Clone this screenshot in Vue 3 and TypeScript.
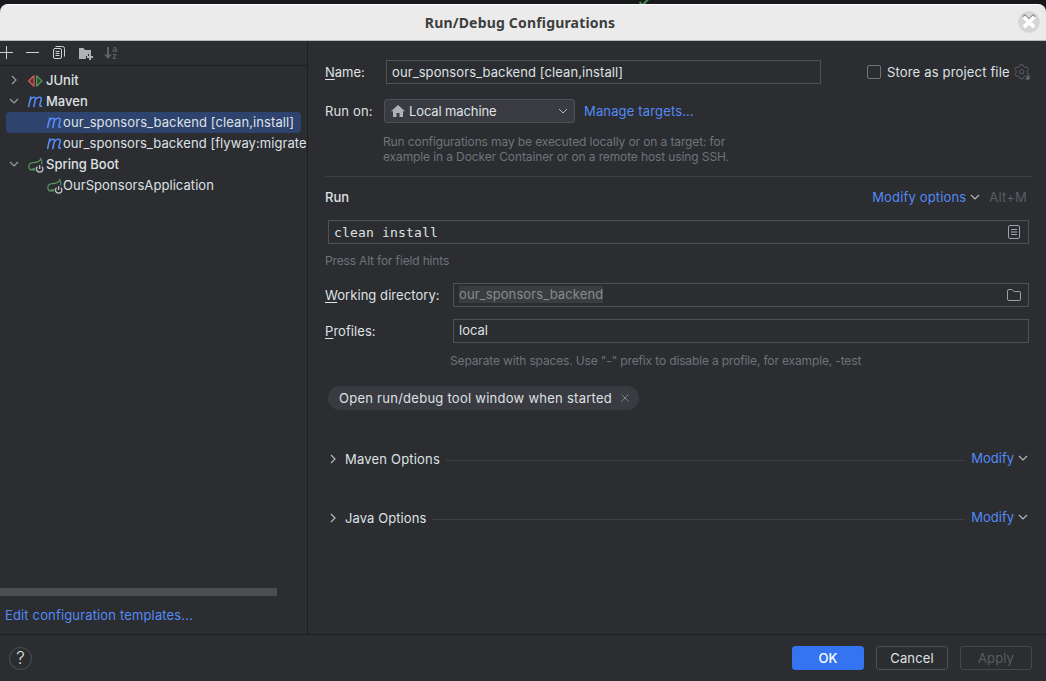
<script setup lang="ts">
import { ref } from 'vue'

type IconKind = 'junit' | 'maven' | 'spring'
interface TreeRow {
  label: string
  icon: IconKind
  cls: string
  group?: boolean
  open?: boolean
  selected?: boolean
}

const rows: TreeRow[] = [
  { label: 'JUnit', icon: 'junit', cls: 't-junit', group: true, open: false },
  { label: 'Maven', icon: 'maven', cls: 't-maven', group: true, open: true },
  { label: 'our_sponsors_backend [clean,install]', icon: 'maven', cls: 't-clean', selected: true },
  { label: 'our_sponsors_backend [flyway:migrate', icon: 'maven', cls: 't-flyway' },
  { label: 'Spring Boot', icon: 'spring', cls: 't-spring', group: true, open: true },
  { label: 'OurSponsorsApplication', icon: 'spring', cls: 't-app' },
]

const name = ref('our_sponsors_backend [clean,install]')
const command = ref('clean install')
const profiles = ref('local')
const sections = ['Maven Options', 'Java Options']
</script>

<template>
  <div class="screen">
    <div class="backdrop">
      <svg class="tick" width="14" height="4" viewBox="0 0 14 4"><path d="M1.500 2l2 2M4.500 5l6-6" stroke="#3f8f4b" stroke-width="2" fill="none" /></svg>
    </div>
    <header class="titlebar">
      <span class="title">Run/Debug Configurations</span>
      <svg class="close" width="22" height="22" viewBox="0 0 22 22">
        <circle cx="11" cy="11" r="10.800" fill="#d6d6d6" />
        <path d="M4.800 5.500L6.800 3.900 11 8l4.200-4.100 2 1.600" stroke="#8d8d8d" stroke-width="1.200" fill="none" />
        <path d="M5.900 6l10.200 10.200M16.100 6L5.900 16.200" stroke="#fff" stroke-width="3.800" />
      </svg>
    </header>

    <div class="body">
      <aside class="sidebar">
        <div class="toolbar">
          <svg width="124" height="24" viewBox="0 0 124 24" fill="none">
            <path d="M0 11.500h13M6.500 5v13M26 11.500h13" stroke="#ced0d6" />
            <rect x="53.500" y="7.500" width="8" height="10" rx="1.500" stroke="#ced0d6" />
            <path d="M55.500 5.500h7a2 2 0 0 1 2 2v8M55.500 10.500h4M55.500 12.500h4M55.500 14.500h4" stroke="#ced0d6" />
            <path d="M79 7h4.500l1.500 2h6v4h-3v2h-2v3h-7z" fill="#afb1b6" />
            <path d="M90 13v6M87 16h6" stroke="#afb1b6" stroke-width="2" />
            <path d="M108 6v9" stroke="#5e6064" stroke-width="2" />
            <path d="M104 13.500h8L108 18z" fill="#5e6064" />
            <text x="112.300" y="11" class="sort">a</text>
            <text x="112.300" y="18.300" class="sort">z</text>
          </svg>
        </div>
        <ul class="tree">
          <li v-for="row in rows" :key="row.label" :class="['row', { selected: row.selected, group: row.group }]">
            <svg v-if="row.group" class="arrow" width="10" height="10" viewBox="0 0 10 10">
              <path :d="row.open ? 'M1 3l4 4 4-4' : 'M3 1l4 4-4 4'" stroke="#9da0a8" stroke-width="1.1" fill="none" />
            </svg>
            <svg v-if="row.icon === 'junit'" class="ico" width="16" height="16" viewBox="0 0 16 16" fill="none">
              <path d="M6 2.800v10.400L.6 8z" fill="#5a3335" stroke="#db5c5c" stroke-width="1.200" stroke-linejoin="round" />
              <path d="M8.600 2.800v10.400L14 8z" fill="#2b4a33" stroke="#57965c" stroke-width="1.200" stroke-linejoin="round" />
            </svg>
            <svg v-else-if="row.icon === 'maven'" class="ico" width="16" height="16" viewBox="0 0 16 16" fill="none">
              <path d="M.6 12.500L2.800 3M2.100 6.200C3.600 2.800 8 2 7.400 5.400L5.800 12.500M7 6.200C8.700 2.800 14 2 13.200 5.400L11.900 10.700c-.3 1.500.5 1.700 1.600 1.300" stroke="#548af7" stroke-width="1.600" stroke-linecap="round" />
            </svg>
            <svg v-else class="ico" width="16" height="16" viewBox="0 0 16 16" fill="none">
              <path d="M7.500 12.800H3.400C1.600 12.800.8 11.200.8 9.600c0-2.400 2-3.700 4.500-3.900C9 5.400 11.800 4.600 12.800 1.700c1 2 1.400 3.600.9 5.600M2.800 12.500c3 0 5-1.200 6.800-3" stroke="#57965c" stroke-width="1.200" />
              <circle cx="11.700" cy="12" r="4.600" class="knock" />
              <path d="M9.500 9.700a3.200 3.200 0 1 0 4.400 0M11.700 8v4" stroke="#ced0d6" stroke-width="1.200" />
            </svg>
            <span :class="row.cls">{{ row.label }}</span>
          </li>
        </ul>
        <div class="scrollbar"></div>
        <a class="link templates">Edit configuration templates...</a>
      </aside>

      <main class="panel">
        <div class="line name-line">
          <label class="lbl l-name"><u>N</u>ame:</label>
          <div class="field name-field"><span class="t-clean t-name">{{ name }}</span></div>
          <span class="check"></span>
          <span class="t-store">Store as project file</span>
          <svg class="gear" width="16" height="16" viewBox="0 0 16 16" fill="none" stroke="#5a5d63">
            <path d="M5.600 2.600L6.200.8h2.800l.6 1.800 1.500.8 1.900-.4 1.400 2.400-1.300 1.500v1.700l1.300 1.400-1.400 2.400-1.900-.4-1.500.9-.6 1.800H6.200l-.6-1.800-1.500-.9-1.900.4L.8 10l1.300-1.400V6.900L.8 5.400 2.200 3l1.900.4z" stroke-linejoin="round" />
            <circle cx="7.600" cy="7.700" r="2.200" />
            <path d="M15.500 11v4.500H11z" fill="#6f737a" stroke="none" />
          </svg>
        </div>

        <div class="line target-line">
          <span class="lbl l-runon">Run on:</span>
          <div class="combo">
            <svg width="14" height="12" viewBox="0 0 14 12"><path d="M7 0l7 6.300h-2V12H8.500V8h-3v4H2V6.300H0z" fill="#afb1b6" /></svg>
            <span class="t-local">Local machine</span>
            <svg class="end" width="10" height="8" viewBox="0 0 10 8"><path d="M1 2l4 4 4-4" stroke="#b4b8bf" fill="none" /></svg>
          </div>
          <a class="link t-manage">Manage targets...</a>
        </div>

        <div class="hint target-hint">
          <div class="h1">Run configurations may be executed locally or on a target: for</div>
          <div class="h2">example in a Docker Container or on a remote host using SSH.</div>
        </div>

        <div class="divider"></div>

        <div class="line run-line">
          <span class="t-run">Run</span>
          <a class="link t-modopt">Modify options</a>
          <svg class="chev" width="10" height="8" viewBox="0 0 10 8"><path d="M1 2l4 4 4-4" stroke="#b4b8bf" stroke-width="1.200" fill="none" /></svg>
          <span class="t-alt">Alt+M</span>
        </div>

        <div class="field command">
          <span class="mono">{{ command }}</span>
          <svg class="f-doc" width="12" height="14" viewBox="0 0 12 14" fill="none" stroke="#9da0a8"><rect x=".5" y=".5" width="11" height="13" rx="1.500" /><path d="M3 4.500h6M3 9.500h6" /><path d="M3 7h6" stroke-width="2" stroke="#6c6e74" /></svg>
        </div>
        <div class="hint press"><span class="h3">Press Alt for field hints</span></div>

        <div class="line dir-line">
          <label class="lbl l-dir"><u>W</u>orking directory:</label>
          <div class="field grow">
            <span class="macro">our_sponsors_backend</span>
            <svg class="f-folder" width="14" height="12" viewBox="0 0 14 12" fill="none" stroke="#9da0a8"><path d="M.5 10V2A1.500 1.500 0 0 1 2 .5h3l2 2h5A1.500 1.500 0 0 1 13.500 4v6a1.500 1.500 0 0 1-1.500 1.500H2A1.500 1.500 0 0 1 .5 10z" /></svg>
          </div>
        </div>
        <div class="line prof-line">
          <label class="lbl l-prof"><u>P</u>rofiles:</label>
          <div class="field grow"><span class="t-prof">{{ profiles }}</span></div>
        </div>
        <div class="hint sep-hint"><span class="h4">Separate with spaces. Use "-" prefix to disable a profile, for example, -test</span></div>

        <div class="chip">
          <span class="t-chip">Open run/debug tool window when started</span>
          <svg width="8" height="8" viewBox="0 0 8 8"><path d="M.5.5l7 7M7.500.5l-7 7" stroke="#7e8187" /></svg>
        </div>

        <div v-for="(s, i) in sections" :key="s" class="section">
          <svg class="s-arrow" width="6" height="10" viewBox="0 0 6 10"><path d="M1 1l4 4-4 4" stroke="#b4b8bf" stroke-width="1.200" fill="none" /></svg>
          <span :class="['s-title', i === 0 ? 't-mopt' : 't-jopt']">{{ s }}</span>
          <span class="rule"></span>
          <a class="link t-mod">Modify</a>
          <svg class="chev s-chev" width="10" height="8" viewBox="0 0 10 8"><path d="M1 2l4 4 4-4" stroke="#b4b8bf" stroke-width="1.200" fill="none" /></svg>
        </div>
      </main>
    </div>

    <footer class="footer">
      <button class="help">?</button>
      <button class="btn primary">OK</button>
      <button class="btn">Cancel</button>
      <button class="btn disabled">Apply</button>
    </footer>
  </div>
</template>

<style>
body { background: #18191c; overflow: hidden; }
</style>

<style scoped>
* { box-sizing: border-box; }
.screen {
  width: 1046px; height: 681px; display: flex; flex-direction: column; overflow: hidden;
  background: #18191c; color: #dfe1e5;
  font: 13px/20px Inter, "Liberation Sans", sans-serif; white-space: nowrap;
}
.backdrop { height: 4px; flex: none; padding-left: 638px; display: flex; }
.titlebar {
  height: 37px; flex: none; display: flex; align-items: center; justify-content: center; position: relative;
  background: #ebebeb; border-top: 1px solid #fff; border-bottom: 1px solid #b9b9b9; border-radius: 8px 8px 0 0;
}
.title { font: bold 14px/20px "Noto Sans", "Open Sans", sans-serif; letter-spacing: .18px; color: #3d3d3d; margin-right: 6px; }
.close { position: absolute; right: 6px; top: 6px; }
.body { flex: 1; display: flex; min-height: 0; background: #2b2d30; }
.sidebar { width: 308px; flex: none; border-right: 1px solid #1e1f22; display: flex; flex-direction: column; overflow: hidden; }
.toolbar { height: 25px; flex: none; border-bottom: 1px solid #1e1f22; }
.toolbar svg { display: block; }
.sort { font: bold 9px "Liberation Sans", sans-serif; fill: #5e6064; }
.tree { list-style: none; margin: 0 6px 0 6px; padding: 4px 0 0; flex: 1; }
.row { height: 21px; display: flex; align-items: center; padding-left: 40.500px; border-radius: 4px; }
.row span { margin-top: -1px; }
.row.group { padding-left: 3px; font-weight: 500; }
.row.selected { background: #2e436e; }
.arrow { margin-right: 9px; margin-top: -1px; flex: none; }
.ico { flex: none; margin-right: .500px; }
.group .ico { margin-right: 2px; }
.knock { fill: #2b2d30; }
.scrollbar { width: 277px; height: 8px; background: #4d4e51; }
.templates { margin: 9px 0 9px 5px; align-self: flex-start; letter-spacing: .15px; }
.link { color: #548af7; }
.t-clean { letter-spacing: .09px; }
.t-flyway { letter-spacing: .07px; }
.t-app { letter-spacing: .06px; }

.panel { flex: 1; min-width: 0; padding-left: 17px; display: flex; flex-direction: column; }
.line { display: flex; align-items: center; height: 24px; flex: none; }
u { text-underline-offset: 2px; }
.field { height: 24px; border: 1px solid #4e5157; display: flex; align-items: center; padding-left: 5px; flex: none; }
.name-line { margin-top: 19px; }
.l-name { width: 61px; }
.t-name { margin-top: -1px; }
.name-field { width: 435px; }
.check { width: 14px; height: 14px; border: 1px solid #6f737a; border-radius: 2px; margin-left: 46px; margin-right: 6px; }
.t-store { letter-spacing: .17px; }
.gear { margin-left: 4px; }
.target-line { margin-top: 15px; }
.l-runon { width: 59px; letter-spacing: .15px; }
.combo { width: 191px; height: 24px; background: #393b40; border: 1px solid #4e5157; border-radius: 3px; display: flex; align-items: center; padding: 0 6px; margin-right: 9px; }
.combo span { margin-left: 4px; letter-spacing: -.12px; }
.combo .end { margin-left: auto; }
.t-manage { margin-top: -1px; letter-spacing: .15px; }
.hint { font-size: 12px; line-height: 15px; color: #6f737a; flex: none; }
.h1, .h2 { letter-spacing: -.117px; }
.h3 { letter-spacing: -.16px; }
.h4 { letter-spacing: -.146px; }
.target-hint { margin: 11px 0 0 58px; height: 30px; }
.divider { height: 1px; margin: 12px 14px 0 0; background: #3d3f43; flex: none; }
.run-line { margin-top: 8px; padding-right: 19px; }
.t-run { font-weight: 500; margin-right: auto; }
.t-modopt { letter-spacing: .16px; }
.chev { margin-left: 4px; flex: none; }
.t-alt { color: #5a5d63; margin-left: 9px; letter-spacing: .2px; }
.command { margin: 11px 17px 0 3px; }
.mono { font: 13px/18px "DejaVu Sans Mono", monospace; letter-spacing: .174px; margin-top: 1px; }
.f-doc { margin-left: auto; margin-right: 8px; }
.press { margin-top: 9px; }
.dir-line { margin-top: 15px; padding-right: 17px; }
.prof-line { margin-top: 12px; padding-right: 17px; }
.l-dir, .l-prof { width: 128px; flex: none; letter-spacing: .06px; }
.grow { flex: 1; }
.macro { color: #868a91; background: #3b3c3d; line-height: 17px; margin-top: -1px; letter-spacing: .1px; }
.f-folder { margin-left: auto; margin-right: 7px; }
.t-prof { margin-top: -2px; }
.sep-hint { margin: 10px 0 0 125px; }
.chip { margin: 18px 0 0 3px; width: 311px; height: 24px; border-radius: 12px; background: #393b40; padding: 0 10px 0 11px; display: flex; align-items: center; justify-content: space-between; flex: none; }
.t-chip { letter-spacing: .26px; }
.section { height: 20px; margin-top: 39px; display: flex; align-items: center; padding: 0 18px 0 5px; flex: none; }
.s-arrow { margin-right: 9px; }
.t-mopt { letter-spacing: .2px; }
.t-jopt { letter-spacing: .08px; }
.rule { height: 1px; flex: 1; background: #3d3f43; margin: 2px 6px 0 6px; }
.t-mod { margin-top: -2px; }
.s-chev { margin-top: -2px; }

.footer { height: 47px; flex: none; background: #2b2d30; border-top: 1px solid #1e1f22; display: flex; align-items: center; padding: 0 14px 0 9px; gap: 12px; }
.btn, .help { font: 13px/20px Inter, sans-serif; color: #dfe1e5; background: transparent; border: 1px solid #4e5157; padding: 0; }
.btn { width: 72px; height: 24px; border-radius: 3px; letter-spacing: .12px; }
.help { width: 23px; height: 23px; border-radius: 50%; margin-right: auto; font-size: 17px; font-weight: 300; }
.primary { background: #3574f0; border-color: #3574f0; color: #fff; font-weight: 500; }
.disabled { color: #5a5d63; border-color: #43454a; }
</style>
